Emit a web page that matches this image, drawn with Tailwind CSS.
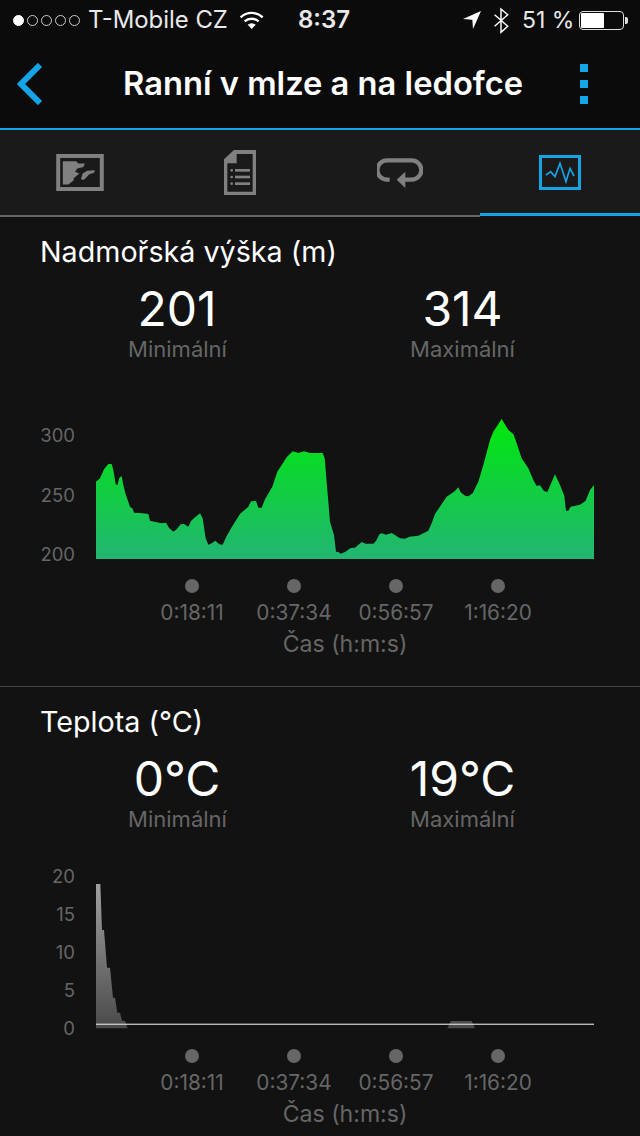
<!DOCTYPE html>
<html lang="cs">
<head>
  <meta charset="UTF-8">
  <meta name="viewport" content="width=device-width, initial-scale=1">
  <title>Ranní v mlze a na ledofce</title>
  <script src="https://cdn.jsdelivr.net/npm/@tailwindcss/browser@4"></script>
</head>
<body class="w-[640px] h-[1136px] overflow-hidden bg-[#121212] font-['Inter',sans-serif] text-white">

  <!-- status bar -->
  <div class="h-[40px] bg-[#0b0b0b] flex items-center pl-[13px] text-[23px] text-[#e8e8e8]">
    <div class="flex gap-[3px]">
      <span class="w-[11px] h-[11px] rounded-full bg-white border border-white"></span>
      <span class="w-[11px] h-[11px] rounded-full border border-[#ccc]"></span>
      <span class="w-[11px] h-[11px] rounded-full border border-[#ccc]"></span>
      <span class="w-[11px] h-[11px] rounded-full border border-[#ccc]"></span>
      <span class="w-[11px] h-[11px] rounded-full border border-[#ccc]"></span>
    </div>
    <span class="ml-[8px] w-[140px] text-[23.9px] whitespace-nowrap">T-Mobile CZ</span>
    <svg class="ml-[11px]" width="26" height="20" viewBox="720 30 76 60" fill="none" stroke="#fff" stroke-width="7">
      <path d="M724 52 A48 48 0 0 1 790 52"/>
      <path d="M736 64 A32 32 0 0 1 778 64"/>
      <path d="M757 87 L745 74 A18 18 0 0 1 769 74 Z" fill="#fff" stroke="none"/>
    </svg>
    <span class="ml-[33px] w-[52px] font-semibold text-[24px] whitespace-nowrap">8:37</span>
    <svg class="ml-[113px]" width="18" height="18" viewBox="432 36 54 54" fill="#fff"><path d="M432 60 L486 36 L462 90 L460 62 Z"/></svg>
    <svg class="ml-[12px]" width="16" height="27" viewBox="520 20 50 80" fill="none" stroke="#fff" stroke-width="4.5"><path d="M525 42 L566 78 L545 97 V24 L566 42 L525 78"/></svg>
    <span class="ml-[13px] w-[52px] whitespace-nowrap">51 %</span>
    <div class="ml-[5px] w-[45px] h-[19px] border border-[#ddd] rounded-[4px] p-[1px]">
      <div class="w-[23px] h-full bg-white rounded-[1px]"></div>
    </div>
    <div class="ml-[1px] w-[3px] h-[7px] bg-[#ddd] rounded-r-[2px]"></div>
  </div>

  <!-- nav bar -->
  <div class="h-[88px] bg-[#0b0b0b] flex items-center pl-[17px]">
    <svg width="26" height="42" viewBox="0 0 26 42" fill="none" stroke="#14a5e8" stroke-width="6"><path d="M23 2 L4 21 L23 40"/></svg>
    <h1 class="ml-[80px] w-[400px] text-[32.7px] font-semibold whitespace-nowrap">Ranní v mlze a na ledofce</h1>
    <div class="ml-[57px] flex flex-col gap-[8px]">
      <span class="w-[8px] h-[8px] bg-[#14a5e8]"></span>
      <span class="w-[8px] h-[8px] bg-[#14a5e8]"></span>
      <span class="w-[8px] h-[8px] bg-[#14a5e8]"></span>
    </div>
  </div>

  <!-- tabs -->
  <div class="border-t-2 border-[#14a5e8] h-[89px] flex">
    <div class="w-[160px] h-[87px] bg-[#1a1a1a] flex items-center justify-center border-b-2 border-[#666]">
      <svg width="48" height="37" viewBox="168 96 144 112">
        <rect x="174" y="102" width="132" height="100" fill="none" stroke="#808080" stroke-width="12"/>
        <path fill="#808080" d="M188 118 L228 118 L235 125 L255 125 L250 135 L232 140 L225 150 L238 155 L220 170 L222 175 L205 188 L188 188 Z"/>
        <path fill="#808080" d="M243 172 L248 155 L262 147 L285 145 L283 153 L268 157 L255 172 L248 175 Z"/>
      </svg>
    </div>
    <div class="w-[160px] h-[87px] bg-[#1a1a1a] flex items-center justify-center border-b-2 border-[#666]">
      <svg width="32" height="45" viewBox="672 85 96 135">
        <path fill="#808080" fill-rule="evenodd" d="M672 113 L702 85 H768 V220 H672 Z M682 125 V210 H758 V97 H710 V125 Z"/>
        <circle cx="695" cy="146" r="4" fill="#808080"/>
        <circle cx="695" cy="166" r="4" fill="#808080"/>
        <circle cx="695" cy="186" r="4" fill="#808080"/>
        <rect x="705" y="142" width="45" height="8" fill="#808080"/>
        <rect x="705" y="162" width="45" height="8" fill="#808080"/>
        <rect x="705" y="182" width="45" height="8" fill="#808080"/>
      </svg>
    </div>
    <div class="w-[160px] h-[87px] bg-[#1a1a1a] flex items-center justify-center border-b-2 border-[#666]">
      <svg width="46" height="30" viewBox="172 115 138 90">
        <path fill="none" stroke="#808080" stroke-width="13" d="M210 180 H202 A26 26 0 0 1 202 122 H276 A26 26 0 0 1 276 180 H245"/>
        <path fill="#808080" d="M231 180 L257 156 V205 Z"/>
      </svg>
    </div>
    <div class="w-[160px] h-[86px] bg-[#1a1a1a] flex items-center justify-center border-b-[3px] border-[#14a5e8]">
      <svg class="mt-[1px]" width="42" height="35" viewBox="657 100 126 105" fill="none" stroke="#14a5e8">
        <rect x="661.5" y="104.5" width="117" height="96" stroke-width="9"/>
        <path stroke-width="5" d="M678 160 L692 150 L705 165 L720 125 L738 180 L750 140 L762 163"/>
      </svg>
    </div>
  </div>

  <!-- elevation -->
  <section class="h-[470px] border-b border-[#444] pt-[17px]">
    <h2 class="pl-[40px] h-[36px] leading-[36px] text-[28.7px]">Nadmořská výška (m)</h2>
    <div class="mt-[12px] flex">
      <div class="w-[284px] pl-[35px] text-center">
        <div class="w-[284px] h-[54px] leading-[54px] text-[48px]">201</div>
        <div class="w-[285px] mt-[1px] h-[24px] leading-[24px] text-[22px] text-[#666]">Minimální</div>
      </div>
      <div class="ml-[36px] w-[285px] text-center">
        <div class="h-[54px] leading-[54px] text-[48px]">314</div>
        <div class="mt-[1px] h-[24px] leading-[24px] text-[22px] text-[#666]">Maximální</div>
      </div>
    </div>
    <div class="mt-[49px] h-[150px] flex items-start">
      <div class="w-[75px] -mt-[4px] text-right text-[18.5px] text-[#666]">
        <div class="h-[59.5px] leading-[59.5px]">300</div>
        <div class="h-[59.5px] leading-[59.5px]">250</div>
        <div class="h-[59.5px] leading-[59.5px]">200</div>
      </div>
      <svg class="ml-[21px]" width="498" height="150" viewBox="198 0 1494 450">
        <defs>
          <linearGradient id="green" x1="0" y1="0" x2="0" y2="1">
            <stop offset="0" stop-color="#00e80c"/>
            <stop offset="1" stop-color="#22b573"/>
          </linearGradient>
        </defs>
        <path fill="url(#green)" d="M198 447 L198 215 L210 205 L222 178 L235 162 L245 162 L250 180 L257 222 L262 226 L268 203 L275 198 L280 225 L287 253 L300 290 L308 296 L312 308 L330 309 L355 312 L360 332 L380 337 L395 340 L408 338 L418 355 L430 365 L440 358 L452 343 L462 342 L475 350 L483 333 L495 322 L510 310 L518 325 L527 385 L535 404 L545 400 L556 392 L568 403 L578 404 L590 378 L605 352 L630 312 L655 290 L663 274 L678 273 L685 293 L695 293 L705 268 L727 230 L742 185 L770 142 L788 124 L805 129 L822 124 L840 129 L878 129 L884 145 L892 240 L900 335 L912 375 L918 425 L925 426 L932 431 L945 426 L962 414 L975 413 L995 396 L1007 401 L1030 401 L1038 393 L1048 373 L1055 370 L1068 374 L1085 369 L1110 385 L1125 386 L1138 380 L1165 377 L1195 362 L1205 340 L1215 312 L1250 260 L1275 243 L1285 232 L1292 247 L1305 257 L1315 259 L1328 250 L1345 215 L1360 165 L1380 90 L1390 65 L1415 27 L1435 60 L1450 72 L1460 100 L1475 145 L1495 175 L1510 210 L1520 228 L1530 226 L1542 243 L1552 246 L1575 193 L1590 225 L1603 258 L1608 302 L1615 302 L1622 290 L1650 284 L1667 272 L1680 240 L1692 225 L1692 447 Z"/>
      </svg>
    </div>
    <div class="mt-[19px] pl-[141px] flex">
      <div class="w-[102px] flex flex-col items-center"><span class="w-[14px] h-[14px] rounded-full bg-[#666]"></span><span class="mt-[8px] h-[24px] leading-[24px] text-[20.8px] text-[#666]">0:18:11</span></div>
      <div class="w-[102px] flex flex-col items-center"><span class="w-[14px] h-[14px] rounded-full bg-[#666]"></span><span class="mt-[8px] h-[24px] leading-[24px] text-[20.8px] text-[#666]">0:37:34</span></div>
      <div class="w-[102px] flex flex-col items-center"><span class="w-[14px] h-[14px] rounded-full bg-[#666]"></span><span class="mt-[8px] h-[24px] leading-[24px] text-[20.8px] text-[#666]">0:56:57</span></div>
      <div class="w-[102px] flex flex-col items-center"><span class="w-[14px] h-[14px] rounded-full bg-[#666]"></span><span class="mt-[8px] h-[24px] leading-[24px] text-[20.8px] text-[#666]">1:16:20</span></div>
    </div>
    <div class="mt-[5px] pl-[200px] w-[490px] h-[28px] leading-[28px] text-center text-[23.1px] text-[#666]">Čas (h:m:s)</div>
  </section>

  <!-- temperature -->
  <section class="pt-[17px]">
    <h2 class="pl-[40px] h-[36px] leading-[36px] text-[28.7px]">Teplota (°C)</h2>
    <div class="mt-[12px] flex">
      <div class="w-[285px] pl-[35px] text-center">
        <div class="w-[284px] h-[54px] leading-[54px] text-[48px]">0°C</div>
        <div class="w-[285px] mt-[1px] h-[24px] leading-[24px] text-[22px] text-[#666]">Minimální</div>
      </div>
      <div class="ml-[35px] w-[285px] text-center">
        <div class="h-[54px] leading-[54px] text-[48px]">19°C</div>
        <div class="mt-[1px] h-[24px] leading-[24px] text-[22px] text-[#666]">Maximální</div>
      </div>
    </div>
    <div class="mt-[39px] h-[160px] flex items-start">
      <div class="w-[75px] -mt-[13px] text-right text-[18.5px] text-[#666]">
        <div class="h-[38px] leading-[38px]">20</div>
        <div class="h-[38px] leading-[38px]">15</div>
        <div class="h-[38px] leading-[38px]">10</div>
        <div class="h-[38px] leading-[38px]">5</div>
        <div class="h-[38px] leading-[38px]">0</div>
      </div>
      <svg class="ml-[21px]" width="498" height="160" viewBox="198 15 1494 480">
        <defs>
          <linearGradient id="gray" gradientUnits="userSpaceOnUse" x1="0" y1="57" x2="0" y2="490">
            <stop offset="0" stop-color="#a0a0a0"/>
            <stop offset="1" stop-color="#4a4a4a"/>
          </linearGradient>
        </defs>
        <path fill="url(#gray)" d="M198 490 V57 H211 L216 195 H222 L231 308 H240 L249 398 H255 L262 443 H270 L276 467 H285 L293 490 Z"/>
        <path fill="url(#gray)" d="M1252 490 L1263 468 H1325 L1335 490 Z"/>
        <rect x="198" y="476" width="1494" height="3.5" fill="#dcdcdc"/>
      </svg>
    </div>
    <div class="mt-[19px] pl-[141px] flex">
      <div class="w-[102px] flex flex-col items-center"><span class="w-[14px] h-[14px] rounded-full bg-[#666]"></span><span class="mt-[8px] h-[24px] leading-[24px] text-[20.8px] text-[#666]">0:18:11</span></div>
      <div class="w-[102px] flex flex-col items-center"><span class="w-[14px] h-[14px] rounded-full bg-[#666]"></span><span class="mt-[8px] h-[24px] leading-[24px] text-[20.8px] text-[#666]">0:37:34</span></div>
      <div class="w-[102px] flex flex-col items-center"><span class="w-[14px] h-[14px] rounded-full bg-[#666]"></span><span class="mt-[8px] h-[24px] leading-[24px] text-[20.8px] text-[#666]">0:56:57</span></div>
      <div class="w-[102px] flex flex-col items-center"><span class="w-[14px] h-[14px] rounded-full bg-[#666]"></span><span class="mt-[8px] h-[24px] leading-[24px] text-[20.8px] text-[#666]">1:16:20</span></div>
    </div>
    <div class="mt-[5px] pl-[200px] w-[490px] h-[28px] leading-[28px] text-center text-[23.1px] text-[#666]">Čas (h:m:s)</div>
  </section>
</body>
</html>
